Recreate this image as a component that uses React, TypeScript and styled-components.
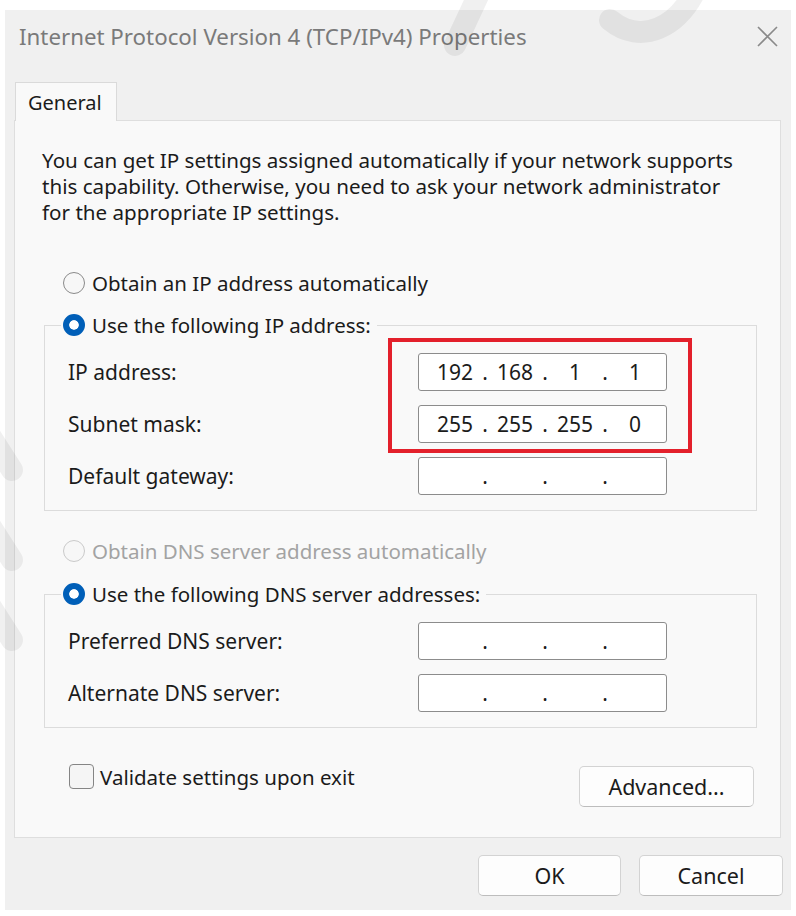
import styled, { createGlobalStyle } from 'styled-components';
import { Fragment } from 'react';

const GlobalStyle = createGlobalStyle`
  html, body {
    margin: 0;
    padding: 0;
    background: #ffffff;
  }
  body {
    font-family: "Noto Sans", "Open Sans", sans-serif;
    color: #1b1b1b;
  }
`;

const Page = styled.div`
  position: relative;
  padding: 10px 0 0 5px;
`;

const Dialog = styled.div`
  width: 786px;
  height: 900px;
  box-sizing: border-box;
  background: #f0f0f0;
  display: flex;
  flex-direction: column;
`;

const TitleBar = styled.div`
  height: 52px;
  display: flex;
  align-items: center;
  justify-content: space-between;
  padding: 0 13px 0 14px;
`;

const Title = styled.div`
  font-size: 22.3px;
  color: #7a7a7a;
`;

const CloseButton = styled.button`
  border: none;
  background: none;
  padding: 0;
  width: 21px;
  height: 21px;
  display: grid;
  place-items: center;
  cursor: pointer;
`;

const TabStrip = styled.div`
  display: flex;
  margin: 20px 0 -1px 10px;
  position: relative;
  z-index: 1;
`;

const Tab = styled.div`
  width: 102px;
  height: 39px;
  box-sizing: border-box;
  padding-left: 12px;
  display: flex;
  align-items: center;
  font-size: 20px;
  background: #f9f9f9;
  border: 1px solid #dadada;
  border-bottom: none;
`;

const Panel = styled.div`
  margin: 0 10px 0 9px;
  height: 718px;
  box-sizing: border-box;
  background: #f9f9f9;
  border: 1px solid #dedede;
  padding: 26px 23px 0 27px;
  display: flex;
  flex-direction: column;
`;

const Intro = styled.p`
  margin: 0;
  font-size: 20.6px;
  line-height: 26px;
  white-space: nowrap;
`;

const RadioRow = styled.label<{ $top: number; $disabled?: boolean }>`
  display: flex;
  align-items: center;
  gap: 7px;
  height: 30px;
  margin: ${({ $top }) => $top}px 0 0 21px;
  font-size: 20.5px;
  color: ${({ $disabled }) => ($disabled ? '#a3a3a3' : '#1b1b1b')};
`;

const RadioDot = styled.span<{ $checked?: boolean; $disabled?: boolean }>`
  width: 22px;
  height: 22px;
  box-sizing: border-box;
  border-radius: 50%;
  flex-shrink: 0;
  ${({ $checked, $disabled }) =>
    $checked
      ? `
    background: #005fb8;
    border: 6.5px solid #005fb8;
    box-shadow: inset 0 0 0 5px #ffffff;
  `
      : `
    background: #f7f7f7;
    border: 1px solid ${$disabled ? '#cacaca' : '#8a8a8a'};
  `}
`;

const Group = styled.fieldset<{ $top: number }>`
  margin: ${({ $top }) => $top}px 0 0 2px;
  padding: 0 16px 15px 16px;
  border: 1px solid #dcdcdc;
  min-width: 0;
`;

const Legend = styled.legend`
  padding: 0 6px 0 2px;
  display: flex;
  align-items: center;
  gap: 7px;
  height: 30px;
  font-size: 20.5px;
`;

const FieldGrid = styled.div`
  display: grid;
  grid-template-columns: 350px 249px;
  grid-auto-rows: 38px;
  row-gap: 14px;
  margin: 13px 0 0 7px;
`;

const FieldLabel = styled.div<{ $row: number }>`
  grid-column: 1;
  grid-row: ${({ $row }) => $row};
  display: flex;
  align-items: center;
  font-size: 21px;
`;

const IpBox = styled.div<{ $row: number }>`
  grid-column: 2;
  grid-row: ${({ $row }) => $row};
  box-sizing: border-box;
  background: #ffffff;
  border: 1px solid #8c8c8c;
  border-radius: 3px;
  display: flex;
  align-items: center;
  padding-left: 9px;
  font-size: 21px;
`;

const Octet = styled.span`
  width: 54px;
  text-align: center;
`;

const Dot = styled.span`
  width: 6px;
  text-align: center;
`;

const Highlight = styled.div`
  grid-column: 2;
  grid-row: 1 / span 2;
  margin: -15px -25px -10px -30px;
  border: 4px solid #e3202b;
  pointer-events: none;
  z-index: 2;
`;

const BottomRow = styled.div`
  display: flex;
  justify-content: space-between;
  align-items: flex-start;
  margin: 36px 3px 0 27px;
`;

const CheckRow = styled.label`
  display: flex;
  align-items: center;
  gap: 6px;
  height: 25px;
  font-size: 20.5px;
`;

const CheckBox = styled.span`
  width: 25px;
  height: 25px;
  box-sizing: border-box;
  border: 1px solid #858585;
  border-radius: 4px;
  background: #f5f5f5;
`;

const Button = styled.button<{ $width: number }>`
  width: ${({ $width }) => $width}px;
  height: 41px;
  box-sizing: border-box;
  background: #fdfdfd;
  border: 1px solid #d3d3d3;
  border-bottom-color: #bdbdbd;
  border-radius: 5px;
  font-family: inherit;
  font-size: 21.5px;
  color: #1b1b1b;
  padding: 0;
  cursor: pointer;
`;

const AdvancedButton = styled(Button)`
  margin-top: 2px;
`;

const Footer = styled.div`
  display: flex;
  justify-content: flex-end;
  gap: 18px;
  margin-top: 17px;
  padding-right: 8px;
`;

/* faint watermark lying over the screenshot */
const Watermark = styled.svg`
  position: absolute;
  left: 0;
  top: 0;
  width: 796px;
  height: 916px;
  pointer-events: none;
`;

function CloseIcon() {
  return (
    <svg width="21" height="21" viewBox="0 0 21 21" aria-hidden>
      <path d="M1 1L20 20M20 1L1 20" stroke="#8a8a8a" strokeWidth="1.6" fill="none" />
    </svg>
  );
}

function IpField({ values, row }: { values: string[]; row: number }) {
  return (
    <IpBox $row={row}>
      {values.map((v, i) => (
        <Fragment key={i}>
          <Octet>{v}</Octet>
          {i < 3 && <Dot>.</Dot>}
        </Fragment>
      ))}
    </IpBox>
  );
}

const empty = ['', '', '', ''];

export default function App() {
  return (
    <Page>
      <GlobalStyle />
      <Dialog>
        <TitleBar>
          <Title>Internet Protocol Version 4 (TCP/IPv4) Properties</Title>
          <CloseButton aria-label="Close">
            <CloseIcon />
          </CloseButton>
        </TitleBar>

        <TabStrip>
          <Tab>General</Tab>
        </TabStrip>

        <Panel>
          <Intro>
            You can get IP settings assigned automatically if your network supports
            <br />
            this capability. Otherwise, you need to ask your network administrator
            <br />
            for the appropriate IP settings.
          </Intro>

          <RadioRow $top={43}>
            <RadioDot />
            Obtain an IP address automatically
          </RadioRow>

          <Group $top={12}>
            <Legend>
              <RadioDot $checked />
              Use the following IP address:
            </Legend>
            <FieldGrid>
              <FieldLabel $row={1}>IP address:</FieldLabel>
              <IpField row={1} values={['192', '168', '1', '1']} />
              <FieldLabel $row={2}>Subnet mask:</FieldLabel>
              <IpField row={2} values={['255', '255', '255', '0']} />
              <FieldLabel $row={3}>Default gateway:</FieldLabel>
              <IpField row={3} values={empty} />
              <Highlight />
            </FieldGrid>
          </Group>

          <RadioRow $top={25} $disabled>
            <RadioDot $disabled />
            Obtain DNS server address automatically
          </RadioRow>

          <Group $top={13}>
            <Legend>
              <RadioDot $checked />
              Use the following DNS server addresses:
            </Legend>
            <FieldGrid>
              <FieldLabel $row={1}>Preferred DNS server:</FieldLabel>
              <IpField row={1} values={empty} />
              <FieldLabel $row={2}>Alternate DNS server:</FieldLabel>
              <IpField row={2} values={empty} />
            </FieldGrid>
          </Group>

          <BottomRow>
            <CheckRow>
              <CheckBox />
              Validate settings upon exit
            </CheckRow>
            <AdvancedButton $width={175}>Advanced...</AdvancedButton>
          </BottomRow>
        </Panel>

        <Footer>
          <Button $width={143}>OK</Button>
          <Button $width={144}>Cancel</Button>
        </Footer>
      </Dialog>

      <Watermark viewBox="0 0 796 916" aria-hidden>
        <g stroke="#000" strokeOpacity="0.06" strokeWidth="22" fill="none" strokeLinecap="round">
          <path d="M490 -30L455 45" />
          <path d="M610 20C640 45 680 30 700 -20" />
          <path d="M-20 420L12 470" />
          <path d="M-20 510L12 560" />
          <path d="M-20 590L12 640" />
        </g>
      </Watermark>
    </Page>
  );
}
